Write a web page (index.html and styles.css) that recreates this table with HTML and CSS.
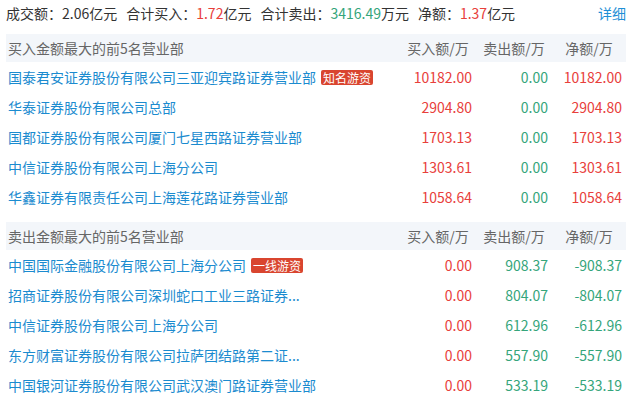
FILE: index.html
```html
<!DOCTYPE html>
<html lang="zh-CN">
<head>
<meta charset="utf-8">
<title>龙虎榜</title>
<link rel="stylesheet" href="styles.css">
</head>
<body>
<div class="page">
  <div class="summary">
    <div class="stats">
      <span class="stat">成交额：2.06亿元</span>
      <span class="stat">合计买入：<span class="up">1.72</span>亿元</span>
      <span class="stat">合计卖出：<span class="down">3416.49</span>万元</span>
      <span class="stat">净额：<span class="up">1.37</span>亿元</span>
    </div>
    <a class="detail">详细</a>
  </div>

  <div class="section">
    <div class="row head">
      <div class="name">买入金额最大的前5名营业部</div>
      <div class="col">买入额/万</div>
      <div class="col">卖出额/万</div>
      <div class="col">净额/万</div>
    </div>
    <div class="row">
      <div class="name"><a class="link">国泰君安证券股份有限公司三亚迎宾路证券营业部</a><span class="tag">知名游资</span></div>
      <div class="num up">10182.00</div>
      <div class="num down">0.00</div>
      <div class="num up">10182.00</div>
    </div>
    <div class="row">
      <div class="name"><a class="link">华泰证券股份有限公司总部</a></div>
      <div class="num up">2904.80</div>
      <div class="num down">0.00</div>
      <div class="num up">2904.80</div>
    </div>
    <div class="row">
      <div class="name"><a class="link">国都证券股份有限公司厦门七星西路证券营业部</a></div>
      <div class="num up">1703.13</div>
      <div class="num down">0.00</div>
      <div class="num up">1703.13</div>
    </div>
    <div class="row">
      <div class="name"><a class="link">中信证券股份有限公司上海分公司</a></div>
      <div class="num up">1303.61</div>
      <div class="num down">0.00</div>
      <div class="num up">1303.61</div>
    </div>
    <div class="row">
      <div class="name"><a class="link">华鑫证券有限责任公司上海莲花路证券营业部</a></div>
      <div class="num up">1058.64</div>
      <div class="num down">0.00</div>
      <div class="num up">1058.64</div>
    </div>
  </div>

  <div class="section second">
    <div class="row head">
      <div class="name">卖出金额最大的前5名营业部</div>
      <div class="col">买入额/万</div>
      <div class="col">卖出额/万</div>
      <div class="col">净额/万</div>
    </div>
    <div class="row">
      <div class="name"><a class="link">中国国际金融股份有限公司上海分公司</a><span class="tag">一线游资</span></div>
      <div class="num up">0.00</div>
      <div class="num down">908.37</div>
      <div class="num down">-908.37</div>
    </div>
    <div class="row">
      <div class="name"><a class="link">招商证券股份有限公司深圳蛇口工业三路证券...</a></div>
      <div class="num up">0.00</div>
      <div class="num down">804.07</div>
      <div class="num down">-804.07</div>
    </div>
    <div class="row">
      <div class="name"><a class="link">中信证券股份有限公司上海分公司</a></div>
      <div class="num up">0.00</div>
      <div class="num down">612.96</div>
      <div class="num down">-612.96</div>
    </div>
    <div class="row">
      <div class="name"><a class="link">东方财富证券股份有限公司拉萨团结路第二证...</a></div>
      <div class="num up">0.00</div>
      <div class="num down">557.90</div>
      <div class="num down">-557.90</div>
    </div>
    <div class="row">
      <div class="name"><a class="link">中国银河证券股份有限公司武汉澳门路证券营业部</a></div>
      <div class="num up">0.00</div>
      <div class="num down">533.19</div>
      <div class="num down">-533.19</div>
    </div>
  </div>
</div>
</body>
</html>
```
FILE: styles.css
```css
* { box-sizing: border-box; }
html, body { margin: 0; padding: 0; background: #fff; }
body {
  font-family: "Noto Sans CJK SC", "Noto Sans", sans-serif;
  font-size: 14px;
  color: #333;
}
.page { width: 633px; }
.summary {
  display: flex;
  justify-content: space-between;
  align-items: center;
  height: 26px;
  line-height: 26px;
  padding: 0 7px 0 6px;
  margin-bottom: 8px;
}
.stats { display: flex; gap: 9px; }
.detail { color: #1e8fd6; cursor: pointer; }
.up { color: #e8403b; }
.down { color: #35a57b; }

.section { margin: 0 7px 0 6px; }
.section.second { margin-top: 10px; }
.row {
  display: grid;
  grid-template-columns: 1fr 76px 76px 74px;
  height: 30px;
  align-items: center;
}
.row.head {
  height: 28px;
  background: #f3f6fa;
  color: #666;
}
.name {
  padding-left: 2px;
  display: flex;
  align-items: center;
  white-space: nowrap;
}
.head .col { text-align: center; }
.num { text-align: right; padding-right: 4px; }
.link { color: #1b8bcf; cursor: pointer; }
.tag {
  margin-left: 5px;
  background: #d9452f;
  color: #fff;
  font-size: 12px;
  line-height: 15px;
  height: 15px;
  padding: 0 2px;
  border-radius: 2px;
}
```
